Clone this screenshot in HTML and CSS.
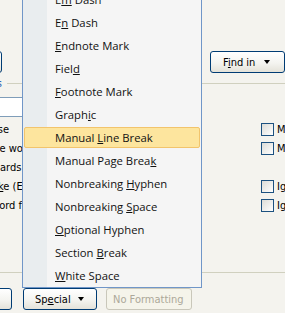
FILE: index.html
```html
<!DOCTYPE html>
<html>
<head>
<meta charset="utf-8">
<link rel="stylesheet" href="styles.css">
</head>
<body>
<div class="dialog">
  <div class="top-row">
    <button class="btn btn-less"><span class="btn-text">&lt;&lt; <u>L</u>ess</span></button>
    <button class="btn btn-findin"><span class="btn-text">F<u>i</u>nd in</span><span class="arrow"></span></button>
  </div>
  <div class="group-head">
    <span class="group-label">Search Options</span>
    <span class="rule"></span>
  </div>
  <div class="search-row">
    <div class="combo">All</div>
  </div>
  <div class="options">
    <div class="opt-left">
      <div class="opt-row"><span>Matc<u>h</u> case</span></div>
      <div class="opt-row"><span>Find whole words onl<u>y</u></span></div>
      <div class="opt-row"><span><u>U</u>se wildcards</span></div>
      <div class="opt-row"><span>Sounds li<u>k</u>e (English)</span></div>
      <div class="opt-row"><span>Find all <u>w</u>ord forms (English)</span></div>
    </div>
    <div class="opt-right">
      <div class="opt-row"><span class="cb"></span><span>Match prefi<u>x</u></span></div>
      <div class="opt-row"><span class="cb"></span><span>Match suffi<u>x</u></span></div>
      <div class="opt-row"></div>
      <div class="opt-row"><span class="cb"></span><span>Ignore punctuation characters</span></div>
      <div class="opt-row"><span class="cb"></span><span>Ignore white-space characters</span></div>
    </div>
  </div>
  <div class="bottom-rule"></div>
  <div class="bottom-row">
    <button class="btn btn-format"><span class="btn-text">F<u>o</u>rmat</span><span class="arrow"></span></button>
    <button class="btn btn-special"><span class="btn-text">Sp<u>e</u>cial</span><span class="arrow"></span></button>
    <button class="btn btn-disabled"><span class="btn-text">No Forma<u>t</u>ting</span></button>
  </div>
</div>

<div class="menu">
  <div class="menu-item"><span>E<u>m</u> Dash</span></div>
  <div class="menu-item"><span>E<u>n</u> Dash</span></div>
  <div class="menu-item"><span><u>E</u>ndnote Mark</span></div>
  <div class="menu-item"><span>Fiel<u>d</u></span></div>
  <div class="menu-item"><span><u>F</u>ootnote Mark</span></div>
  <div class="menu-item"><span>Graph<u>i</u>c</span></div>
  <div class="menu-item is-hover"><span>Manual <u>L</u>ine Break</span></div>
  <div class="menu-item"><span>Manual Page Brea<u>k</u></span></div>
  <div class="menu-item"><span>Nonbreaking <u>H</u>yphen</span></div>
  <div class="menu-item"><span>Nonbreaking <u>S</u>pace</span></div>
  <div class="menu-item"><span><u>O</u>ptional Hyphen</span></div>
  <div class="menu-item"><span>Section <u>B</u>reak</span></div>
  <div class="menu-item"><span><u>W</u>hite Space</span></div>
</div>
</body>
</html>
```

FILE: styles.css
```css
html, body {
  margin: 0;
  padding: 0;
}
body {
  width: 285px;
  height: 313px;
  overflow: hidden;
  position: relative;
  background: #f4f3ee;
  font-family: "DejaVu Sans", sans-serif;
  font-stretch: condensed;
  font-size: 11px;
  color: #000;
}
.dialog {
  display: flex;
  flex-direction: column;
}
.top-row {
  display: flex;
  justify-content: space-between;
  padding-top: 51px;
}
.btn {
  height: 22px;
  box-sizing: border-box;
  border: 1px solid #003c74;
  border-radius: 3px;
  background: linear-gradient(#ffffff, #f4f4f0 55%, #e4e2d9);
  font: inherit;
  color: #000;
  padding: 0;
  margin: 0;
  display: flex;
  align-items: center;
  white-space: nowrap;
}
.btn-text { white-space: pre; }
.arrow {
  width: 0;
  height: 0;
  border-top: 4px solid #000;
  border-left: 3.5px solid transparent;
  border-right: 3.5px solid transparent;
}
.btn-less {
  width: 75px;
  margin-left: -73px;
  justify-content: center;
}
.btn-findin {
  width: 75px;
  padding-left: 12px;
}
.btn-findin .arrow { margin-left: 9px; }
.group-head {
  display: flex;
  align-items: center;
  height: 11px;
  margin-top: 5px;
}
.group-label {
  width: 90px;
  margin-left: -88px;
  text-align: right;
  color: #1c5fb4;
  white-space: nowrap;
  overflow: hidden;
  line-height: 11px;
}
.rule {
  flex: 1;
  height: 1px;
  margin-left: 5px;
  background: #d0d0bf;
}
.search-row {
  display: flex;
  margin-top: 8px;
}
.combo {
  width: 200px;
  height: 20px;
  margin-left: -60px;
  box-sizing: border-box;
  border: 1px solid #7f9db9;
  background: #fff;
  padding-left: 4px;
  line-height: 18px;
}
.options {
  display: flex;
  margin-top: 3px;
}
.opt-left {
  flex: 1;
  margin-left: -47px;
}
.opt-right {
  width: 24px;
}
.opt-row {
  height: 19px;
  display: flex;
  align-items: center;
  white-space: nowrap;
}
.opt-row span { white-space: pre; }
.cb {
  flex: none;
  width: 13px;
  height: 13px;
  box-sizing: border-box;
  border: 1px solid #1c5180;
  background: linear-gradient(135deg, #dcdcd7, #ffffff);
  margin-right: 3px;
}
.bottom-rule {
  height: 1px;
  margin-top: 57px;
  background: #d0d0bf;
}
.bottom-row {
  display: flex;
  margin-top: 15px;
}
.btn-format {
  width: 75px;
  margin-left: -63px;
  padding-left: 12px;
}
.btn-format .arrow { margin-left: 8px; }
.btn-special {
  width: 74px;
  margin-left: 11px;
  padding-left: 11px;
}
.btn-special .arrow { margin-left: 7px; }
.btn-disabled {
  width: 86px;
  margin-left: 9px;
  padding-left: 6px;
  border-color: #c9c7ba;
  background: #f5f4ea;
  color: #aca899;
}
.btn-disabled u { text-decoration: none; }

.menu {
  position: absolute;
  left: 22px;
  top: -13px;
  width: 180px;
  box-sizing: border-box;
  border: 1px solid #7096c8;
  background: linear-gradient(to right, #e9edef 0, #e9edef 24px, #f5f5f5 24px);
  font-family: "Open Sans", "Noto Sans", sans-serif;
  font-stretch: normal;
  font-size: 11.3px;
  color: #111111;
}
.menu-item {
  height: 23px;
  box-sizing: border-box;
  padding-left: 32px;
  display: flex;
  align-items: center;
  white-space: nowrap;
}
.menu-item span { white-space: pre; }
.menu-item.is-hover {
  margin: 1px 1px;
  height: 21px;
  padding-left: 30px;
  border: 1px solid #f2c46c;
  border-radius: 2px;
  background: #fde59e;
}
```
